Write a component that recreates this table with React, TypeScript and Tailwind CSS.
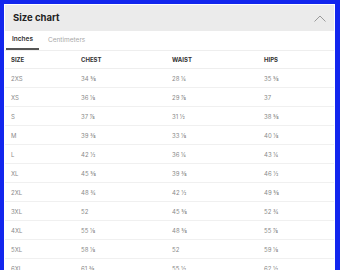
import React from "react";

const rows: [string, string, string, string][] = [
  ["2XS", "34 ⅝", "28 ¼", "35 ⅝"],
  ["XS", "36 ⅛", "29 ⅞", "37"],
  ["S", "37 ⅞", "31 ½", "38 ⅝"],
  ["M", "39 ⅜", "33 ⅛", "40 ⅛"],
  ["L", "42 ½", "36 ¼", "43 ¼"],
  ["XL", "45 ⅝", "39 ⅜", "46 ½"],
  ["2XL", "48 ¾", "42 ½", "49 ⅝"],
  ["3XL", "52", "45 ⅝", "52 ¾"],
  ["4XL", "55 ⅛", "48 ⅝", "55 ⅞"],
  ["5XL", "58 ⅛", "52", "59 ⅛"],
  ["6XL", "61 ⅜", "55 ½", "62 ½"],
];

export default function App() {
  return (
    <div
      className="min-h-screen bg-[#1226ee] pl-[4px] pr-[5px] pt-[4px]"
      style={{ fontFamily: "Inter, 'Noto Sans', 'DejaVu Sans', sans-serif" }}
    >
      <div className="bg-white px-[1px] pt-[1px] min-h-[300px]">
        <div className="h-[26px] bg-[#ebebeb] flex items-center justify-between pl-[8px] pr-[8px]">
          <span className="text-[9.5px] font-bold text-[#222] leading-none">Size chart</span>
          <svg width="12" height="7" viewBox="0 0 12 7" fill="none">
            <path d="M0.5 6.5 L6 1 L11.5 6.5" stroke="#9a9a9a" strokeWidth="1" />
          </svg>
        </div>
        <div className="flex h-[20px] border-b border-[#eeeeee]">
          <div className="ml-[1px] px-[6px] flex items-center border-b-2 border-[#555555] text-[6.5px] font-semibold text-[#333]">
            Inches
          </div>
          <div className="ml-[3px] px-[6px] flex items-center text-[6.5px] text-[#a8a8a8]">
            Centimeters
          </div>
        </div>
        <div className="grid grid-cols-[70px_91px_92px_1fr] h-[18px] items-center border-b border-[#eeeeee] text-[6px] font-bold text-[#333]">
          <div className="pl-[6px]">SIZE</div>
          <div className="pl-[6px]">CHEST</div>
          <div className="pl-[6px]">WAIST</div>
          <div className="pl-[6px]">HIPS</div>
        </div>
        {rows.map((r) => (
          <div
            key={r[0]}
            className="grid grid-cols-[70px_91px_92px_1fr] h-[19px] items-center border-b border-[#f0f0f0] text-[6px] text-[#8a8a8a]"
          >
            {r.map((c, i) => (
              <div key={i} className="pl-[6px]">
                {c}
              </div>
            ))}
          </div>
        ))}
      </div>
    </div>
  );
}
